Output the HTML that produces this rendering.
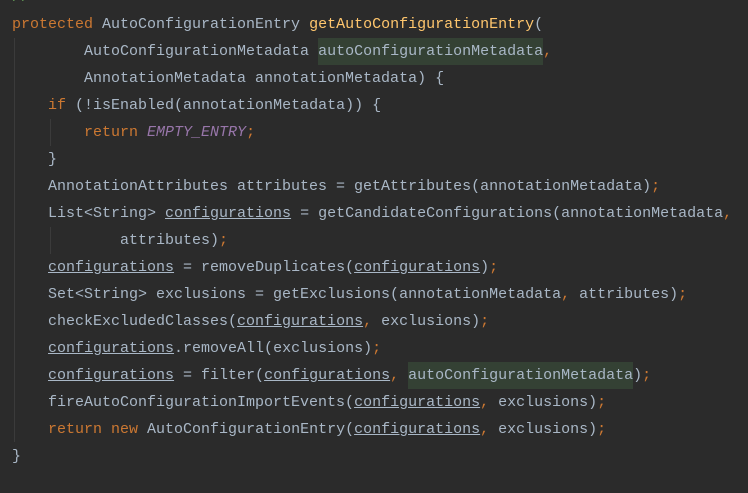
<!DOCTYPE html>
<html><head><style>
html,body{margin:0;padding:0;background:#2b2b2b;width:748px;height:493px;overflow:hidden}
pre{margin:0;position:absolute;left:12px;top:-16px;font-family:"Liberation Mono",monospace;font-size:15px;line-height:27px;color:#a9b7c6;letter-spacing:0}
.k{color:#cc7832}.m{color:#ffc66d}.c{color:#9876aa;font-style:italic}.u{text-decoration:underline}.h{background:#344134;display:inline-block;line-height:27px}.g{color:#629755}
.guide{position:absolute;width:1px;background:#3b3b3b}
</style></head><body>
<div class="guide" style="left:14px;top:38px;height:404px"></div>
<div class="guide" style="left:50px;top:119px;height:27px"></div>
<div class="guide" style="left:50px;top:227px;height:27px"></div>
<pre><span class="g">//</span>
<span class="k">protected </span>AutoConfigurationEntry <span class="m">getAutoConfigurationEntry</span>(
        AutoConfigurationMetadata <span class="h">autoConfigurationMetadata</span><span class="k">,</span>
        AnnotationMetadata annotationMetadata) {
    <span class="k">if </span>(!isEnabled(annotationMetadata)) {
        <span class="k">return </span><span class="c">EMPTY_ENTRY</span><span class="k">;</span>
    }
    AnnotationAttributes attributes = getAttributes(annotationMetadata)<span class="k">;</span>
    List&lt;String&gt; <span class="u">configurations</span> = getCandidateConfigurations(annotationMetadata<span class="k">,</span>
            attributes)<span class="k">;</span>
    <span class="u">configurations</span> = removeDuplicates(<span class="u">configurations</span>)<span class="k">;</span>
    Set&lt;String&gt; exclusions = getExclusions(annotationMetadata<span class="k">, </span>attributes)<span class="k">;</span>
    checkExcludedClasses(<span class="u">configurations</span><span class="k">, </span>exclusions)<span class="k">;</span>
    <span class="u">configurations</span>.removeAll(exclusions)<span class="k">;</span>
    <span class="u">configurations</span> = filter(<span class="u">configurations</span><span class="k">, </span><span class="h">autoConfigurationMetadata</span>)<span class="k">;</span>
    fireAutoConfigurationImportEvents(<span class="u">configurations</span><span class="k">, </span>exclusions)<span class="k">;</span>
    <span class="k">return new </span>AutoConfigurationEntry(<span class="u">configurations</span><span class="k">, </span>exclusions)<span class="k">;</span>
}</pre>
</body></html>
